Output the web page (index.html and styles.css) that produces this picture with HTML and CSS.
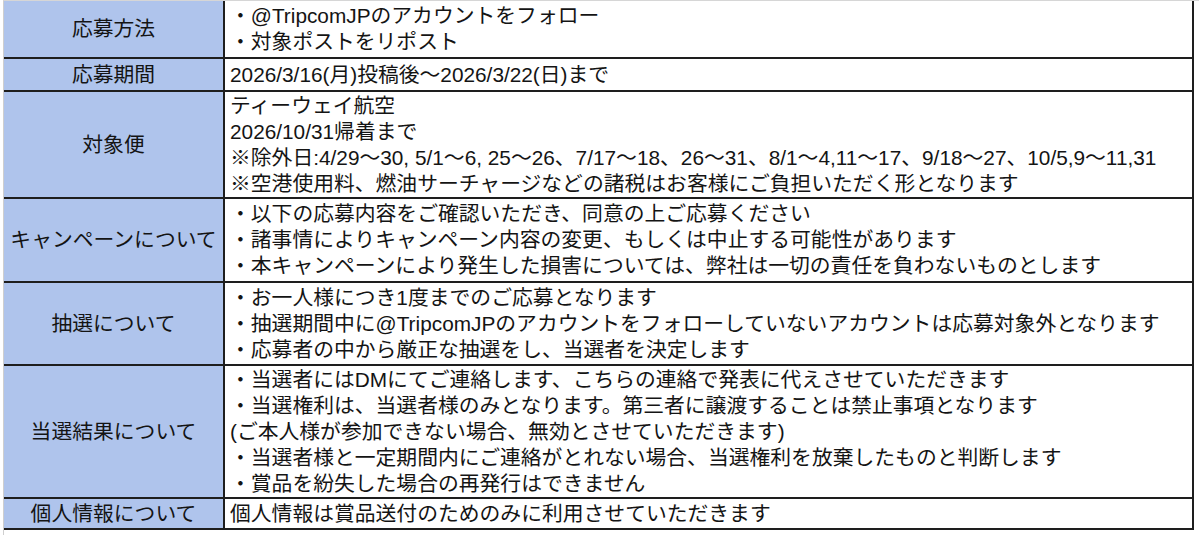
FILE: index.html
```html
<!DOCTYPE html>
<html lang="ja">
<head>
<meta charset="utf-8">
<title>キャンペーン概要</title>
<link rel="stylesheet" href="styles.css">
</head>
<body>
<div class="sheet">
  <div class="table">
    <div class="row r1">
      <div class="label">応募方法</div>
      <div class="value">
        <div>・@TripcomJPのアカウントをフォロー</div>
        <div>・対象ポストをリポスト</div>
      </div>
    </div>
    <div class="row r2">
      <div class="label">応募期間</div>
      <div class="value">
        <div>2026/3/16(月)投稿後～2026/3/22(日)まで</div>
      </div>
    </div>
    <div class="row r3">
      <div class="label">対象便</div>
      <div class="value">
        <div>ティーウェイ航空</div>
        <div>2026/10/31帰着まで</div>
        <div>※除外日:4/29～30, 5/1～6, 25～26、7/17～18、26～31、8/1～4,11～17、9/18～27、10/5,9～11,31</div>
        <div>※空港使用料、燃油サーチャージなどの諸税はお客様にご負担いただく形となります</div>
      </div>
    </div>
    <div class="row r4">
      <div class="label">キャンペーンについて</div>
      <div class="value">
        <div>・以下の応募内容をご確認いただき、同意の上ご応募ください</div>
        <div>・諸事情によりキャンペーン内容の変更、もしくは中止する可能性があります</div>
        <div>・本キャンペーンにより発生した損害については、弊社は一切の責任を負わないものとします</div>
      </div>
    </div>
    <div class="row r5">
      <div class="label">抽選について</div>
      <div class="value">
        <div>・お一人様につき1度までのご応募となります</div>
        <div>・抽選期間中に@TripcomJPのアカウントをフォローしていないアカウントは応募対象外となります</div>
        <div>・応募者の中から厳正な抽選をし、当選者を決定します</div>
      </div>
    </div>
    <div class="row r6">
      <div class="label">当選結果について</div>
      <div class="value">
        <div>・当選者にはDMにてご連絡します、こちらの連絡で発表に代えさせていただきます</div>
        <div>・当選権利は、当選者様のみとなります。第三者に譲渡することは禁止事項となります</div>
        <div>(ご本人様が参加できない場合、無効とさせていただきます)</div>
        <div>・当選者様と一定期間内にご連絡がとれない場合、当選権利を放棄したものと判断します</div>
        <div>・賞品を紛失した場合の再発行はできません</div>
      </div>
    </div>
    <div class="row r7">
      <div class="label">個人情報について</div>
      <div class="value">
        <div>個人情報は賞品送付のためのみに利用させていただきます</div>
      </div>
    </div>
  </div>
</div>
</body>
</html>
```
FILE: styles.css
```css
html, body {
  margin: 0;
  padding: 0;
  background: #ffffff;
}

body {
  font-family: "Liberation Sans", Arial, "Noto Sans CJK JP", sans-serif;
  font-size: 20.8px;
  line-height: 26px;
  color: #141414;
  width: 1199px;
  height: 535px;
  overflow: hidden;
}

.sheet {
  margin-left: 3px;
  border-left: 1px solid #cfcfcf;
  border-top: 1px solid #d6d6d6;
  height: 534px;
}

.table {
  width: 1190px;
  border-right: 2px solid #1e1e1e;
  box-sizing: border-box;
}

.row {
  display: flex;
  border-bottom: 2px solid #1e1e1e;
  box-sizing: border-box;
}

.r1 { height: 58px; }
.r2 { height: 33px; }
.r3 { height: 107px; }
.r4 { height: 84px; }
.r5 { height: 83px; }
.r6 { height: 133px; }
.r7 { height: 31px; }

.label {
  flex: 0 0 219px;
  background: #afc4ec;
  border-right: 2px solid #1e1e1e;
  display: flex;
  align-items: center;
  justify-content: center;
  white-space: nowrap;
}

.value {
  flex: 1;
  padding-left: 5px;
  display: flex;
  flex-direction: column;
  justify-content: center;
  white-space: nowrap;
  overflow: hidden;
}
```
